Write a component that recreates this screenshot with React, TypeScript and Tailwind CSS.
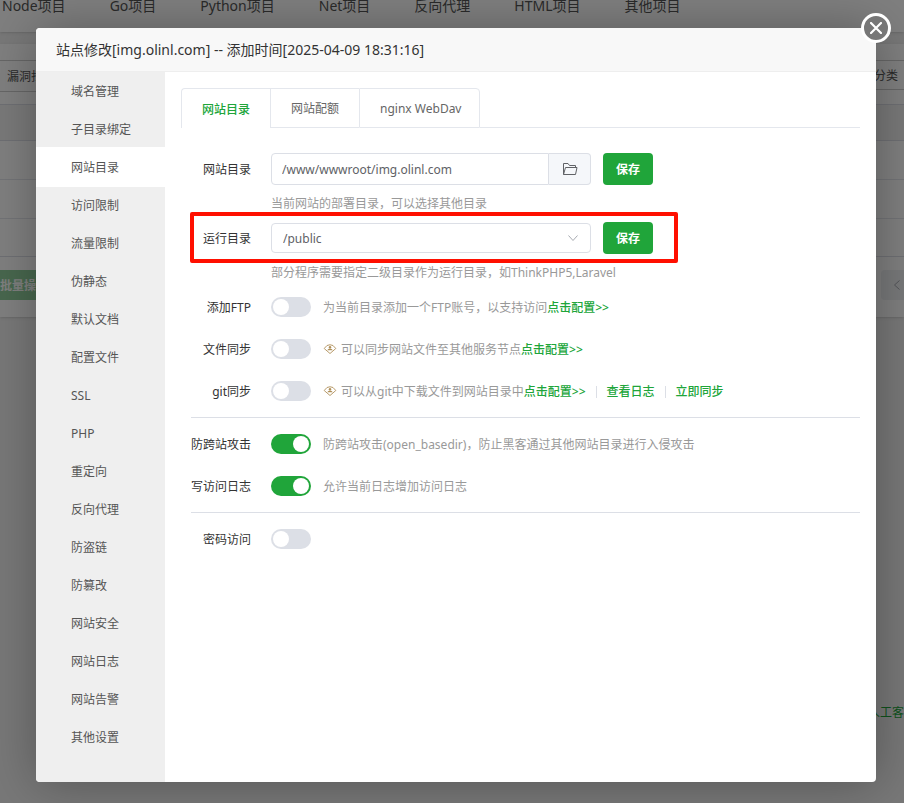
import { useState, type ReactNode } from 'react';

const projectTabs = ['Node项目', 'Go项目', 'Python项目', 'Net项目', '反向代理', 'HTML项目', '其他项目'];

const menu = [
  '域名管理', '子目录绑定', '网站目录', '访问限制', '流量限制', '伪静态', '默认文档', '配置文件', 'SSL',
  'PHP', '重定向', '反向代理', '防盗链', '防篡改', '网站安全', '网站日志', '网站告警', '其他设置',
];

const tabs = ['网站目录', '网站配额', 'nginx WebDav'];

function SitesPage() {
  return (
    <div className="h-screen overflow-hidden bg-[#f0f0f0] text-[#555]" aria-hidden="true">
      <nav className="flex h-8 gap-11 bg-white pl-0.5 text-[14px] leading-3 whitespace-nowrap shadow-sm">
        {projectTabs.map((name) => (
          <span key={name}>{name}</span>
        ))}
      </nav>
      <section className="mt-3 flex flex-col bg-white pt-4 pb-[17px] text-[12px] shadow-sm">
        <div className="flex justify-between">
          <span className="flex h-8 items-center border-y border-[#ccc] pt-0.5 pr-3 pl-[7px]">漏洞扫描</span>
          <span className="flex h-[30px] items-center border-y border-[#ccc] pt-0.5 pr-[6px] pl-3">分类</span>
        </div>
        <div className="mt-3 h-[37px] border-y border-[#dcdfe6] bg-[#f3f3f3]" />
        <div className="h-[39px] border-b border-[#e4e7ed]" />
        <div className="h-[39px] border-b border-[#e4e7ed]" />
        <div className="h-[38px] border-b border-[#dcdfe6]" />
        <div className="mt-[13px] flex justify-between">
          <span className="flex h-[30px] items-center bg-[#90cf9d] pt-0.5 pr-4 font-bold text-white">批量操作</span>
          <span className="flex h-[30px] w-[23px] items-center justify-center rounded-l-sm bg-[#f0f2f5] pl-2">
            <svg className="h-3 w-2" viewBox="0 0 8 12" fill="none" stroke="#a8abb2">
              <path d="M6.5 1.5 1.5 6l5 4.500" />
            </svg>
          </span>
        </div>
      </section>
      <div className="mt-[388px] text-right text-[12px] leading-4 text-[#20a53a]">人工客</div>
    </div>
  );
}

function FolderIcon() {
  return (
    <svg className="h-[14px] w-4" viewBox="0 0 16 14" fill="none" stroke="#606266" strokeLinejoin="round" aria-hidden="true">
      <path d="M1.500 12.500V1.500h4.500l1.500 2h6v2" />
      <path d="M1.500 12.500 3.500 5.500h11.500l-1.500 7z" />
    </svg>
  );
}

function ProIcon() {
  return (
    <svg className="mr-1 -mt-0.5 h-3 w-[14px]" viewBox="0 0 14 12" fill="none" stroke="#b0905a" aria-hidden="true">
      <path d="M1.200 5.500 4 2.500Q7 1 10 2.500l2.800 3L7 10.500z" strokeWidth=".9" />
      <circle cx="7" cy="4.300" r="1.200" fill="#b0905a" stroke="none" />
      <path d="M4.300 7.300Q5 5.500 7 5.500t2.700 1.800z" fill="#b0905a" stroke="none" />
    </svg>
  );
}

function SaveButton() {
  return (
    <button type="button" className="ml-3 h-8 w-[50px] rounded bg-[#20a53a] pt-0.5 text-[12px] font-bold text-white">
      保存
    </button>
  );
}

function Label({ id, children }: { id: string; children: ReactNode }) {
  return (
    <label htmlFor={id} className="mr-5 w-[60px] shrink-0 pt-0.5 text-right whitespace-nowrap text-[#333]">
      {children}
    </label>
  );
}

function Hint({ children }: { children: ReactNode }) {
  return <p className="mt-[9px] mb-2 pl-20 leading-5 text-[#999]">{children}</p>;
}

function SwitchRow({ id, label, on = false, children }: { id: string; label: string; on?: boolean; children?: ReactNode }) {
  return (
    <div className="flex h-8 items-center">
      <Label id={id}>{label}</Label>
      <input
        id={id}
        type="checkbox"
        role="switch"
        defaultChecked={on}
        className="mr-3 h-5 w-10 shrink-0 appearance-none rounded-full bg-[#dcdfe6] p-0.5 before:block before:size-4 before:rounded-full before:bg-white checked:bg-[#20a53a] checked:before:ml-5"
      />
      <div className="flex items-center pt-0.5 whitespace-nowrap text-[#999]">{children}</div>
    </div>
  );
}

function Link({ children }: { children: ReactNode }) {
  return (
    <a href="#" className="font-medium text-[#20a53a]">
      {children}
    </a>
  );
}

function Separator() {
  return <span className="mx-[10px] h-3 w-px bg-[#dcdfe6]" />;
}

export default function App() {
  const [active, setActive] = useState('网站目录');
  const [tab, setTab] = useState('网站目录');

  return (
    <div className="relative font-['Noto_Sans','Noto_Sans_CJK_SC',sans-serif]">
      <SitesPage />
      <div className="absolute inset-0 bg-black/50 pt-7 pr-7 pb-[21px] pl-9">
        <div
          role="dialog"
          aria-label="站点修改"
          className="relative flex h-full flex-col rounded bg-white text-[12px] shadow-[1px_1px_50px_rgba(0,0,0,0.3)]"
        >
          <h2 className="flex h-11 shrink-0 items-center rounded-t border-b border-[#eee] bg-[#f8f8f8] px-5 text-[14px] text-[#333]">
            站点修改[img.olinl.com] -- 添加时间[2025-04-09 18:31:16]
          </h2>
          <button
            type="button"
            aria-label="关闭"
            className="absolute -top-[15px] -right-[15px] flex size-[30px] items-center justify-center rounded-full border-[3px] border-white bg-[#777] text-white"
          >
            <svg className="size-3" viewBox="0 0 12 12" stroke="currentColor" strokeWidth="2.200" strokeLinecap="round">
              <path d="m1 1 10 10M11 1 1 11" />
            </svg>
          </button>
          <div className="flex min-h-0 flex-1">
            <nav className="flex w-[129px] shrink-0 flex-col rounded-bl bg-[#efefef]">
              {menu.map((name) => (
                <button
                  key={name}
                  type="button"
                  onClick={() => setActive(name)}
                  className={`-my-px h-10 shrink-0 pt-0.5 pl-[35px] text-left text-[#555] ${name === active ? 'bg-white' : ''}`}
                >
                  {name}
                </button>
              ))}
            </nav>
            <main className="min-w-0 flex-1 p-4">
              <div className="flex h-10">
                <div role="tablist" className="flex">
                  {tabs.map((name) => (
                    <button
                      key={name}
                      type="button"
                      role="tab"
                      aria-selected={name === tab}
                      onClick={() => setTab(name)}
                      className={`border-t border-l border-[#e4e7ed] px-5 pt-0.5 whitespace-nowrap first:rounded-tl last:rounded-tr last:border-r last:pr-[18px] ${
                        name === tab ? 'font-medium text-[#20a53a]' : 'border-b text-[#666]'
                      }`}
                    >
                      {name}
                    </button>
                  ))}
                </div>
                <div className="flex-1 border-b border-[#e4e7ed]" />
              </div>
              <form className="pt-[25px] pl-[10px]">
                <div className="flex h-8 items-center">
                  <Label id="site-path">网站目录</Label>
                  <input
                    id="site-path"
                    defaultValue="/www/wwwroot/img.olinl.com"
                    className="h-8 w-[278px] min-w-0 rounded-l border border-[#dcdfe6] px-[10px] text-[#606266]"
                  />
                  <button
                    type="button"
                    aria-label="选择目录"
                    className="flex h-8 w-[42px] shrink-0 items-center justify-center rounded-r border border-l-0 border-[#dcdfe6] bg-[#f5f7fa]"
                  >
                    <FolderIcon />
                  </button>
                  <SaveButton />
                </div>
                <Hint>当前网站的部署目录，可以选择其他目录</Hint>
                <div className="relative flex h-8 w-fit items-center">
                  <Label id="run-path">运行目录</Label>
                  <div className="relative">
                    <select
                      id="run-path"
                      className="block h-[30px] w-80 appearance-none rounded border border-[#dcdfe6] bg-white px-[11px] pt-0.5 text-[#606266]"
                    >
                      <option>/public</option>
                    </select>
                    <svg
                      className="pointer-events-none absolute top-[10px] right-3 h-[10px] w-3"
                      viewBox="0 0 12 10"
                      fill="none"
                      stroke="#a8abb2"
                      aria-hidden="true"
                    >
                      <path d="m1.500 2.500 4.500 5 4.500-5" />
                    </svg>
                  </div>
                  <SaveButton />
                  <div className="pointer-events-none absolute -top-[10px] -right-[25px] -bottom-[9px] -left-px rounded-xs border-4 border-[#ff0f00]" />
                </div>
                <Hint>部分程序需要指定二级目录作为运行目录，如ThinkPHP5,Laravel</Hint>
                <div className="flex flex-col gap-[10px]">
                  <SwitchRow id="ftp" label="添加FTP">
                    为当前目录添加一个FTP账号，以支持访问<Link>点击配置&gt;&gt;</Link>
                  </SwitchRow>
                  <SwitchRow id="file-sync" label="文件同步">
                    <ProIcon />
                    可以同步网站文件至其他服务节点<Link>点击配置&gt;&gt;</Link>
                  </SwitchRow>
                  <SwitchRow id="git-sync" label="git同步">
                    <ProIcon />
                    可以从git中下载文件到网站目录中<Link>点击配置&gt;&gt;</Link>
                    <Separator />
                    <Link>查看日志</Link>
                    <Separator />
                    <Link>立即同步</Link>
                  </SwitchRow>
                  <hr className="border-[#dcdfe6]" />
                  <SwitchRow id="cross-site" label="防跨站攻击" on>
                    防跨站攻击(open_basedir)，防止黑客通过其他网站目录进行入侵攻击
                  </SwitchRow>
                  <SwitchRow id="access-log" label="写访问日志" on>
                    允许当前日志增加访问日志
                  </SwitchRow>
                  <hr className="border-[#dcdfe6]" />
                  <SwitchRow id="password" label="密码访问" />
                </div>
              </form>
            </main>
          </div>
        </div>
      </div>
    </div>
  );
}
